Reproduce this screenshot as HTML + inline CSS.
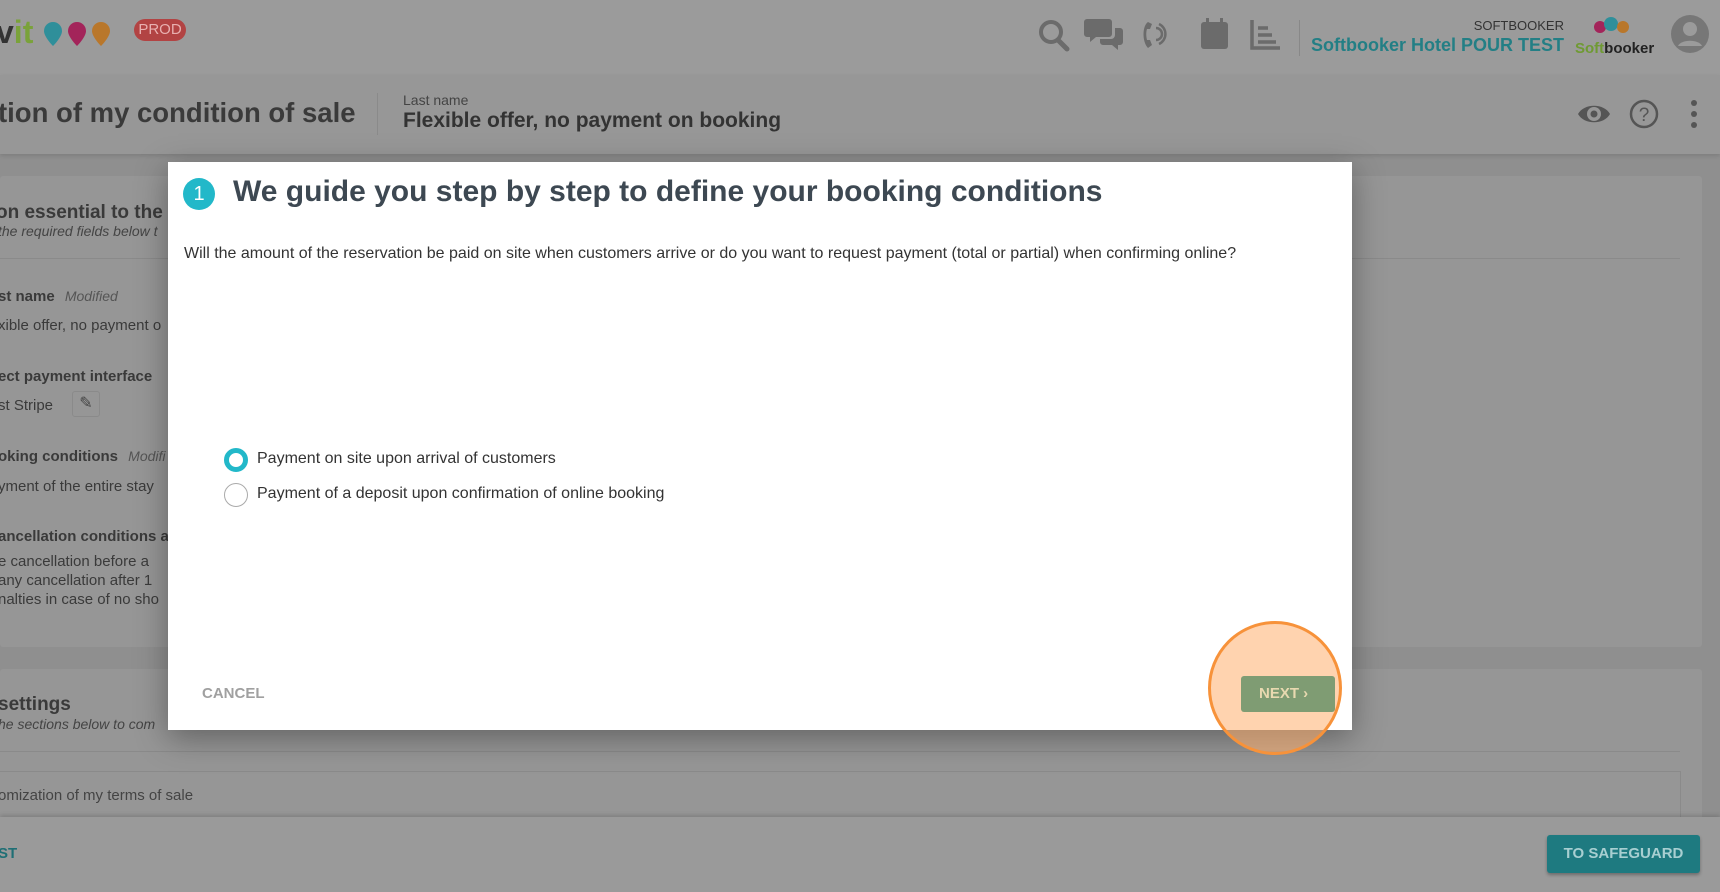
<!DOCTYPE html>
<html><head><meta charset="utf-8"><style>
*{margin:0;padding:0;box-sizing:border-box}
body{width:1720px;height:892px;overflow:hidden;background:#8f8f8f;font-family:"Liberation Sans",Arial,sans-serif;position:relative}
.abs{position:absolute;white-space:nowrap}
.hdr{position:absolute;left:0;top:0;width:1720px;height:75px;background:#9b9b9b;box-shadow:0 2px 4px rgba(0,0,0,.15)}
.bar2{position:absolute;left:0;top:75px;width:1720px;height:79px;background:#979797;box-shadow:0 2px 4px rgba(0,0,0,.12)}
.card{position:absolute;background:#969696;border-radius:3px}
.t{color:#3a3a3a;font-size:15px}
.modal{position:absolute;left:168px;top:162px;width:1184px;height:568px;background:#fff;box-shadow:0 8px 30px rgba(0,0,0,.35)}
</style></head><body>
<div class="hdr"></div>
<div class="abs" style="left:-4px;top:14px;font-size:32px;font-weight:bold;color:#333"><span>v</span><span style="color:#7aa23a">it</span></div>
<svg class="abs" style="left:42px;top:20px" width="72" height="28"><g><path d="M11 2a9 9 0 0 1 9 9c0 6-9 15-9 15S2 17 2 11a9 9 0 0 1 9-9z" fill="#2f8f9a"/><path d="M35 2a9 9 0 0 1 9 9c0 6-9 15-9 15s-9-9-9-15a9 9 0 0 1 9-9z" fill="#a3245a"/><path d="M59 2a9 9 0 0 1 9 9c0 6-9 15-9 15s-9-9-9-15a9 9 0 0 1 9-9z" fill="#b9772b"/></g></svg>
<div class="abs" style="left:134px;top:19px;width:52px;height:22px;border-radius:11px;background:#b24343;color:#e8b0b0;font-size:15px;text-align:center;line-height:22px">PROD</div>
<svg class="abs" style="left:1036px;top:16px" width="250" height="38" fill="#6b6b6b" stroke="#6b6b6b">
<circle cx="15" cy="16" r="10" fill="none" stroke-width="4"/><line x1="22" y1="24" x2="31" y2="33" stroke-width="5" stroke-linecap="round"/>
<path d="M51 3h22a3 3 0 0 1 3 3v12a3 3 0 0 1-3 3H60l-6 5v-5h-3a3 3 0 0 1-3-3V6a3 3 0 0 1 3-3z" stroke="none"/><path d="M79 12h5a3 3 0 0 1 3 3v11a3 3 0 0 1-3 3h-2v5l-6-5h-9a3 3 0 0 1-3-3v-3h11a4 4 0 0 0 4-4z" stroke="none"/>
<path d="M112 6c-6 4-6 20 0 26l4-3-2-5-3 0c-1-4-1-8 0-11l3 0 2-5z" stroke="none"/><path d="M120 12a6 6 0 0 1 0 12M123 8a11 11 0 0 1 0 20" fill="none" stroke-width="2.5"/>
<rect x="165" y="6" width="27" height="27" rx="3" stroke="none"/><rect x="170" y="2" width="3" height="7" stroke="none"/><rect x="184" y="2" width="3" height="7" stroke="none"/>
<path d="M216 4v28h28" fill="none" stroke-width="3.5"/><path d="M222 12h10M222 19h14M222 26h18" stroke-width="3.5"/>
</svg>
<div class="abs" style="left:1299px;top:20px;width:1px;height:36px;background:#888"></div>
<div class="abs" style="right:156px;top:18px;font-size:13px;color:#333">SOFTBOOKER</div>
<div class="abs" style="right:156px;top:35px;font-size:18px;font-weight:bold;color:#237f85">Softbooker Hotel POUR TEST</div>
<svg class="abs" style="left:1592px;top:16px" width="40" height="24"><circle cx="8" cy="11" r="6" fill="#a3245a"/><circle cx="19" cy="8" r="7" fill="#2f8f9a"/><circle cx="31" cy="11" r="6" fill="#b9772b"/></svg>
<div class="abs" style="left:1575px;top:40px;font-size:15px;font-weight:bold;color:#222"><span style="color:#6f9a33">Soft</span>booker</div>
<svg class="abs" style="left:1670px;top:14px" width="40" height="40"><circle cx="20" cy="20" r="19" fill="#777"/><circle cx="20" cy="15" r="7" fill="#9b9b9b"/><path d="M8 32c3-7 21-7 24 0" fill="#9b9b9b"/></svg>

<div class="bar2"></div>
<div class="abs" style="left:-2px;top:97px;font-size:27.5px;font-weight:bold;color:#3a3a3a">tion of my condition of sale</div>
<div class="abs" style="left:377px;top:93px;width:1px;height:42px;background:#8a8a8a"></div>
<div class="abs" style="left:403px;top:92px;font-size:14px;color:#444">Last name</div>
<div class="abs" style="left:403px;top:109px;font-size:21px;font-weight:bold;color:#333">Flexible offer, no payment on booking</div>
<svg class="abs" style="left:1576px;top:98px" width="140" height="32"><path d="M2 16C8 5 28 5 34 16 28 27 8 27 2 16z" fill="#555"/><circle cx="18" cy="16" r="7" fill="#979797"/><circle cx="18" cy="16" r="3.5" fill="#555"/>
<circle cx="68" cy="16" r="13" fill="none" stroke="#555" stroke-width="2.5"/><text x="68" y="23" font-size="19" text-anchor="middle" fill="#555" font-family="Liberation Sans">?</text>
<circle cx="118" cy="5" r="3" fill="#555"/><circle cx="118" cy="16" r="3" fill="#555"/><circle cx="118" cy="27" r="3" fill="#555"/></svg>

<div class="card" style="left:0;top:176px;width:1702px;height:471px"></div>
<div class="abs" style="left:0;top:258px;width:1680px;height:1px;background:#8a8a8a"></div>
<div class="abs t" style="left:-4px;top:202px;font-size:19px;font-weight:bold">on essential to the</div>
<div class="abs t" style="left:-2px;top:223px;font-size:14px;font-style:italic;color:#444">the required fields below t</div>
<div class="abs t" style="left:-2px;top:288px;font-weight:bold">st name <i style="font-weight:normal;color:#555;font-size:14px;margin-left:6px">Modified</i></div>
<div class="abs t" style="left:-2px;top:317px">xible offer, no payment o</div>
<div class="abs t" style="left:-2px;top:368px;font-weight:bold">ect payment interface</div>
<div class="abs t" style="left:-2px;top:397px">st Stripe</div>
<div class="abs" style="left:72px;top:391px;width:28px;height:26px;border:1px solid #8a8a8a;border-radius:3px;color:#444;font-size:16px;text-align:center;line-height:24px">✎</div>
<div class="abs t" style="left:-2px;top:448px;font-weight:bold">oking conditions <i style="font-weight:normal;color:#555;font-size:14px;margin-left:6px">Modifi</i></div>
<div class="abs t" style="left:-2px;top:478px">yment of the entire stay</div>
<div class="abs t" style="left:-2px;top:528px;font-weight:bold">ancellation conditions ar</div>
<div class="abs t" style="left:-2px;top:553px">e cancellation before a</div>
<div class="abs t" style="left:-2px;top:572px">any cancellation after 1</div>
<div class="abs t" style="left:-2px;top:591px">nalties in case of no sho</div>

<div class="card" style="left:0;top:669px;width:1702px;height:160px"></div>
<div class="abs t" style="left:-2px;top:694px;font-size:19px;font-weight:bold">settings</div>
<div class="abs t" style="left:-2px;top:716px;font-size:14px;font-style:italic;color:#444">he sections below to com</div>
<div class="abs" style="left:0;top:751px;width:1680px;height:1px;background:#8a8a8a"></div>
<div class="abs" style="left:-2px;top:771px;width:1683px;height:50px;border:1px solid #8a8a8a;background:#969696"></div>
<div class="abs t" style="left:-2px;top:787px;color:#444">omization of my terms of sale</div>

<div class="abs" style="left:0;top:817px;width:1720px;height:75px;background:#9a9a9a;box-shadow:0 -2px 4px rgba(0,0,0,.15)"></div>
<div class="abs" style="left:-2px;top:845px;font-size:15px;font-weight:bold;color:#1f6f75">ST</div>
<div class="abs" style="left:1547px;top:835px;width:153px;height:38px;background:#1e7a80;border-radius:3px;color:#a8cfd1;font-size:15px;font-weight:bold;text-align:center;line-height:38px;box-shadow:0 2px 3px rgba(0,0,0,.3)">TO SAFEGUARD</div>

<div class="modal">
<div class="abs" style="left:15px;top:16px;width:32px;height:32px;border-radius:50%;background:#22b8c9;color:#fff;font-size:20px;text-align:center;line-height:32px">1</div>
<div class="abs" style="left:65px;top:13px;font-size:30px;font-weight:bold;color:#3d4852">We guide you step by step to define your booking conditions</div>
<div class="abs" style="left:16px;top:83px;font-size:16px;color:#333">Will the amount of the reservation be paid on site when customers arrive or do you want to request payment (total or partial) when confirming online?</div>
<div class="abs" style="left:56px;top:286px;width:24px;height:24px;border-radius:50%;border:5px solid #22b8c9"></div>
<div class="abs" style="left:89px;top:288px;font-size:16px;color:#333">Payment on site upon arrival of customers</div>
<div class="abs" style="left:56px;top:321px;width:24px;height:24px;border-radius:50%;border:1.5px solid #aaa"></div>
<div class="abs" style="left:89px;top:323px;font-size:16px;color:#333">Payment of a deposit upon confirmation of online booking</div>
<div class="abs" style="left:34px;top:523px;font-size:15px;font-weight:bold;color:#a0a0a0">CANCEL</div>
</div>
<div class="abs" style="left:1208px;top:621px;width:134px;height:134px;border-radius:50%;border:3.5px solid #f7923a;background:rgba(255,175,110,.55)"></div>
<div class="abs" style="left:1241px;top:676px;width:94px;height:36px;background:#7f9c73;border-radius:3px;color:#e8d9b0;font-size:15px;font-weight:bold;line-height:36px;padding-left:18px">NEXT ›</div>
</body></html>
